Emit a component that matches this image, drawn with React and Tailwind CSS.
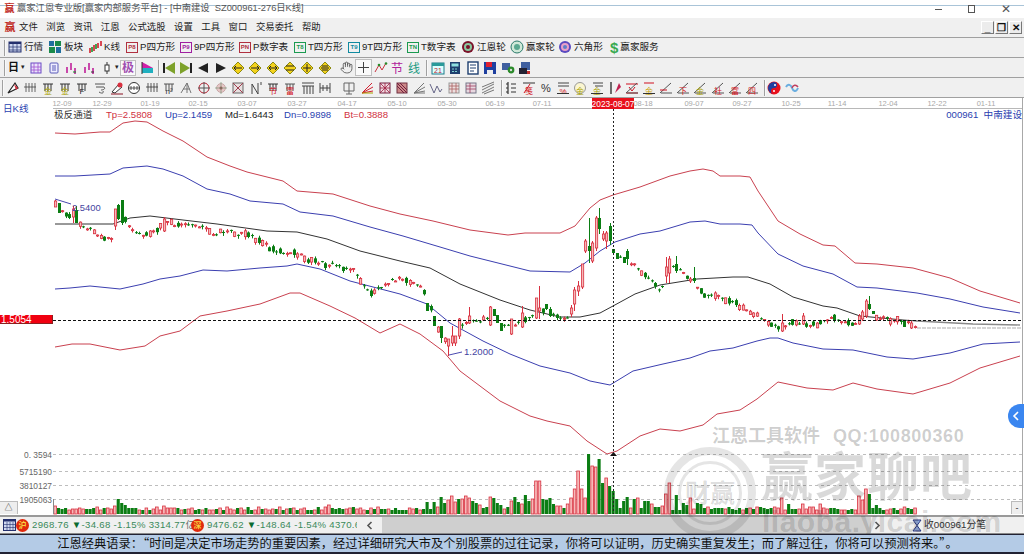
import React from "react";
import { Hand } from "lucide-react";

const CJK = { fontFamily: '"Liberation Sans", "Noto Sans CJK SC", sans-serif' };

const LINES = {
  redUp: [[55,132],[75,133],[100,131],[110,131],[123,122],[135,120],[147,121],[163,130],[183,140],[207,156],[230,165],[247,171],[283,180],[297,190],[333,193],[370,205],[400,213],[433,220],[470,229],[508,234],[525,232],[560,232],[575,225],[590,207],[600,199],[613,194],[640,186],[670,175],[690,170],[703,168],[713,170],[720,175],[740,175],[750,176],[758,190],[778,220],[800,233],[823,244],[835,245],[855,262],[877,263],[913,267],[950,277],[980,290],[1020,302]],
  blueUp: [[55,175],[75,175],[110,173],[123,167],[147,165],[163,168],[183,175],[207,188],[230,193],[250,200],[283,203],[300,211],[333,215],[370,226],[403,235],[440,246],[470,255],[510,265],[530,270],[570,271],[585,262],[600,250],[615,241],[640,233],[660,230],[690,221],[705,220],[720,223],[740,223],[752,224],[758,232],[778,253],[803,265],[833,273],[857,286],[877,287],[917,292],[950,298],[983,306],[1020,312]],
  black: [[55,223],[78,223],[113,223],[130,217],[150,215],[183,219],[217,223],[267,230],[297,231],[327,238],[360,250],[400,260],[430,267],[460,283],[500,299],[530,309],[560,316],[580,316],[600,312],[613,305],[635,293],[660,284],[697,278],[733,276],[748,276],[770,283],[793,296],[823,305],[837,307],[860,315],[903,319],[917,320]],
  blueDn: [[55,288],[70,287],[90,285],[120,288],[143,283],[160,278],[180,275],[203,269],[227,270],[260,267],[287,265],[297,263],[320,268],[350,280],[400,293],[427,303],[450,322],[483,340],[510,353],[540,365],[570,372],[590,380],[610,384],[633,370],[663,363],[690,357],[710,350],[733,347],[757,340],[770,337],[778,337],[793,342],[823,348],[853,349],[887,356],[913,358],[950,352],[983,343],[1020,341]],
  redDn: [[55,346],[72,343],[90,343],[120,349],[145,345],[160,335],[180,330],[200,315],[227,310],[260,303],[290,292],[300,292],[330,305],[355,317],[380,332],[400,323],[420,333],[443,350],[460,370],[500,400],[530,415],[547,420],[570,425],[587,440],[607,453],[617,450],[640,435],[660,428],[680,430],[703,424],[717,413],[740,409],[757,398],[778,381],[807,387],[833,389],[853,382],[877,388],[913,393],[950,382],[980,367],[1020,355]],
};

const CENTER = [[55,203],[60,207],[65,212],[70,215],[76,215],[80,222],[85,227],[90,228],[95,233],[103,238],[110,238],[125,220],[130,228],[135,233],[145,233],[155,231],[163,222],[170,222],[177,225],[190,222],[200,225],[205,228],[213,233],[225,230],[235,232],[250,235],[260,240],[270,247],[285,252],[295,252],[305,258],[320,262],[340,265],[355,270],[365,288],[372,292],[385,282],[400,278],[407,280],[420,285],[430,305],[435,318],[440,335],[445,340],[450,338],[455,335],[460,325],[470,318],[480,320],[490,315],[498,318],[505,325],[512,328],[520,320],[530,316],[540,312],[548,308],[552,315],[560,316],[565,318],[572,316],[613,250],[620,255],[630,262],[640,270],[650,280],[660,288],[665,283],[670,265],[680,270],[690,278],[697,288],[702,293],[705,296],[720,296],[735,303],[750,310],[757,315],[768,322],[778,328],[793,322],[813,324],[832,318],[842,321],[853,325],[860,320],[882,318],[898,319],[916,325]];

// x, body top, body bottom, u=up/d=down, wick top, wick bottom
const CANDLES = [
  [55,200,206,"u",199,206],[59,202,212,"d"],[72,208,216,"u",205,222],[76,209,222,"d",205,222],
  [114,208,225,"u",208,229],[118,204,218,"d",203,219],[122,199,222,"d",199,224],
  [163,218,230,"u",216,231],
  [427,302,310,"d"],[434,315,325,"d"],[440,325,337,"d",325,342],
  [449,338,345,"u",338,355],[452,335,342,"u",325,345],[455,335,342,"u",335,345],[459,318,335,"u",317,338],
  [470,315,322,"u",306,323],[490,306,324,"u",305,325],[493,308,315,"d"],[498,314,322,"d"],[502,322,330,"d"],
  [512,318,333,"u",318,334],[522,312,326,"u",305,327],[535,297,317,"u",297,318],[540,307,310,"u",285,318],[545,303,308,"d",303,309],[550,308,315,"d",306,316],
  [572,307,313,"u",304,316],[575,289,303,"u",286,310],[579,285,290,"u",280,295],[582,263,286,"u",263,288],[586,240,250,"u",238,252],
  [589,245,250,"d",217,262],[593,242,260,"u",240,262],[596,217,247,"u",215,250],[600,217,228,"d",207,233],[603,233,238,"u",230,240],[607,232,240,"u",230,248],[610,225,240,"d",222,244],
  [613,248,252,"d"],[618,252,258,"d"],[622,256,262,"d"],[628,250,258,"d",248,264],
  [666,266,275,"u",256,282],[670,258,272,"u",255,282],[677,263,270,"d",255,272],[690,278,280,"u",276,282],[694,277,280,"d",266,282],
  [782,322,330,"u",313,331],[803,315,323,"u",312,324],[860,315,323,"u",313,324],[863,311,318,"u",309,320],[867,300,315,"u",298,317],[870,303,308,"d",295,309],[873,310,313,"d"],[905,319,326,"d"],[913,322,327,"u",320,328],
];

// x, top of bar, colour
const VOLS = [
  [55,505,"u"],[59,507,"d"],[63,508,"d"],[115,505,"u"],[118,498,"d"],[122,502,"d"],[126,504,"d"],[163,505,"u"],[328,504,"u"],
  [427,501,"d"],[433,501,"d"],[438,506,"u"],[442,496,"d"],[445,502,"d"],[448,499,"u"],[452,495,"u"],[455,501,"u"],[460,498,"d"],[463,498,"u"],[466,495,"u"],[469,497,"u"],[473,500,"d"],[476,502,"d"],[480,504,"u"],[484,507,"d"],[487,506,"d"],[491,496,"u"],[494,497,"d"],[497,502,"d"],[502,504,"d"],[507,506,"d"],[512,500,"u"],[515,496,"d"],[518,501,"d"],[522,503,"u"],[526,494,"d"],[529,500,"d"],[533,498,"u"],[536,480,"u"],[539,480,"u"],[543,498,"d"],[547,499,"d"],[550,497,"d"],[554,503,"d"],[558,505,"u"],[562,505,"u"],[565,507,"d"],[567,503,"u"],[571,497,"u"],[575,488,"u"],[578,470,"u"],[582,488,"u"],[585,497,"u"],[588,453,"d"],[592,465,"u"],[596,466,"u"],[599,458,"d"],[603,482,"d"],[607,477,"u"],[610,485,"d"],[613,490,"d"],[618,498,"d"],[623,500,"d"],[628,496,"d"],[633,498,"d"],[638,497,"u"],[643,500,"d"],[647,500,"d"],[652,503,"u"],[656,506,"d"],[660,506,"d"],[663,505,"u"],[667,493,"u"],[670,482,"u"],[675,494,"d"],[678,494,"d"],[682,502,"d"],[687,504,"d"],[692,497,"u"],[697,502,"d"],[702,503,"d"],[708,506,"u"],
  [782,497,"u"],[787,503,"d"],[803,503,"u"],[820,503,"u"],[860,495,"u"],[863,499,"u"],[866,488,"u"],[870,493,"d"],[875,504,"d"],[917,510,"d"],
];

function interp(pts, x) {
  for (let i = 1; i < pts.length; i++) {
    if (x <= pts[i][0]) {
      const [x0, y0] = pts[i - 1];
      const [x1, y1] = pts[i];
      return y0 + ((y1 - y0) * (x - x0)) / (x1 - x0);
    }
  }
  return pts[pts.length - 1][1];
}

const rnd = (i) => {
  const v = Math.sin(i * 12.9898 + 4.1) * 43758.5453;
  return v - Math.floor(v);
};

const STEP = 3.51;
const COUNT = 246;
const UP_FILL = "#f7b9b9";
const UP_LINE = "#d8303f";
const DOWN = "#0b7d13";

function Candles() {
  const items = [];
  for (let i = 0; i < COUNT; i++) {
    const x = 55 + STEP * i;
    const hit = CANDLES.find((c) => Math.abs(c[0] - x) <= STEP / 2);
    let top, bottom, up, wt, wb;
    if (hit) {
      [, top, bottom] = hit;
      up = hit[3] === "u";
      wt = hit[4] ?? top;
      wb = hit[5] ?? bottom;
    } else {
      const y = interp(CENTER, x) + (rnd(i) - 0.5) * 4;
      up = rnd(i + 50) > 0.5;
      const h = rnd(i + 90) > 0.55 ? 3 + rnd(i + 7) * 3 : 1;
      top = y - h / 2;
      bottom = y + h / 2;
      wt = top - rnd(i + 3) * 2;
      wb = bottom + rnd(i + 9) * 3;
    }
    const cx = Math.round(x) + 0.5;
    items.push(
      <g key={i}>
        <line x1={cx} x2={cx} y1={wt} y2={wb} stroke={up ? UP_LINE : DOWN} strokeWidth="1" />
        {up ? (
          <rect x={cx - 1} y={top} width="2.2" height={Math.max(bottom - top, 1)} fill={UP_FILL} stroke={UP_LINE} strokeWidth="0.8" />
        ) : (
          <rect x={cx - 1.5} y={top} width="3" height={Math.max(bottom - top, 1)} fill={DOWN} />
        )}
      </g>
    );
  }
  return <g>{items}</g>;
}

function Volumes() {
  const items = [];
  for (let i = 0; i < COUNT; i++) {
    const x = 55 + STEP * i;
    const hit = VOLS.find((v) => Math.abs(v[0] - x) <= STEP / 2);
    const top = hit ? hit[1] : 506 + Math.round(rnd(i + 21) * 3.5);
    const up = hit ? hit[2] === "u" : rnd(i + 33) > 0.5;
    items.push(
      up ? (
        <rect key={i} x={x - 1.2} y={top} width="2.6" height={513 - top} fill={UP_FILL} stroke={UP_LINE} strokeWidth="0.8" />
      ) : (
        <rect key={i} x={x - 1.5} y={top} width="3.1" height={513 - top} fill={DOWN} />
      )
    );
  }
  return <g>{items}</g>;
}

const toPts = (pts) => pts.map((p) => p.join(",")).join(" ");

const DATES = [["12-09",62],["12-29",102],["01-19",150],["02-15",198],["03-07",247],["03-27",297],["04-17",347],["05-10",397],["05-30",447],["06-19",495],["07-11",542],["08-18",643],["09-07",694],["09-27",742],["10-25",791],["11-14",837],["12-04",888],["12-22",937],["01-11",986]];
const GRID = [[453,"0. 3594"],[470,"5715190"],[484,"3810127"],[498,"1905063"]];

function Chart() {
  return (
    <svg width="1024" height="417" viewBox="0 97 1024 417" className="block">
      {DATES.map(([d, x]) => (
        <text key={d} x={x} y="105" textAnchor="middle" fontSize="7.5" fill="#a8a8a8" fontFamily="Liberation Sans">{d}</text>
      ))}
      <line x1="53" x2="1022" y1="107.5" y2="107.5" stroke="#b8b8b8" />
      <rect x="592" y="97" width="42" height="11" fill="#e8101c" />
      <text x="613" y="106" textAnchor="middle" fontSize="8.4" fill="#fff" fontFamily="Liberation Sans">2023-08-07</text>
      <line x1="1022.5" x2="1022.5" y1="97" y2="513" stroke="#a8a8a8" />

      {GRID.map(([y, label]) => (
        <g key={y}>
          <line x1="53" x2="1022" y1={y + 0.5} y2={y + 0.5} stroke="#bdbdbd" strokeDasharray="3 3" />
          <text x="52" y={y + 3.5} textAnchor="end" fontSize="8.4" fill="#666" fontFamily="Liberation Sans">{label}</text>
        </g>
      ))}

      <polyline points={toPts(LINES.redUp)} fill="none" stroke="#c9414f" strokeWidth="1" />
      <polyline points={toPts(LINES.blueUp)} fill="none" stroke="#3b3fb0" strokeWidth="1" />
      <polyline points={toPts(LINES.black)} fill="none" stroke="#333" strokeWidth="1" />
      <polyline points="917,320 973,323 1020,324" fill="none" stroke="#8a8a8a" strokeWidth="1.4" />
      <line x1="917" x2="1022" y1="327" y2="327" stroke="#c8c8c8" strokeWidth="1.4" strokeDasharray="4 1" />
      <polyline points={toPts(LINES.blueDn)} fill="none" stroke="#3b3fb0" strokeWidth="1" />
      <polyline points={toPts(LINES.redDn)} fill="none" stroke="#c9414f" strokeWidth="1" />

      <Volumes />
      <Candles />

      <polyline points="55,198 71,203" fill="none" stroke="#4a4ab0" />
      <text x="72" y="210" fontSize="9.4" fill="#44449f" fontFamily="Liberation Sans">2.5400</text>
      <polyline points="449,354 462,351" fill="none" stroke="#4a4ab0" />
      <text x="464" y="354" fontSize="9.6" fill="#44449f" fontFamily="Liberation Sans">1.2000</text>

      <line x1="53" x2="1022" y1="319.5" y2="319.5" stroke="#111" strokeDasharray="3 2" />
      <line x1="613.5" x2="613.5" y1="108" y2="513" stroke="#222" strokeDasharray="2 2" />
      <path d="M613.5 451 L617 455 L610 455 Z" fill="#111" />
      <line x1="53.5" x2="53.5" y1="498" y2="513" stroke="#888" />
    </svg>
  );
}

// small toolbar drawings, all in a 14x14 box
const Ic = ({ children }) => (
  <svg width="14" height="14" viewBox="0 0 14 14" className="block">{children}</svg>
);

const Diamond = ({ mark }) => (
  <Ic>
    <path d="M7 1 L13 7 L7 13 L1 7 Z" fill="#f4d21c" stroke="#8c8a12" />
    {mark}
  </Ic>
);

const ROW2_A = [
  <Ic><rect x="2" y="2" width="10" height="10" fill="#e9e4fb" stroke="#6a4bc4" /><path d="M2 6 L12 6 M2 9 L12 9 M5 2 L5 12 M9 2 L9 12" stroke="#a04fd0" strokeWidth="0.8" /></Ic>,
  <Ic><rect x="3" y="2" width="8" height="10" rx="1" fill="#eef" stroke="#5a5ab8" /><path d="M5 5 H9 M5 7 H9 M5 9 H9" stroke="#5a5ab8" /></Ic>,
  <Ic><path d="M3 6 V12 M7 2 V9 M11 7 V13" stroke="#c0209a" strokeWidth="1.6" /><path d="M9 11 H12" stroke="#0a8a20" /></Ic>,
  <Ic><path d="M3 6 V12 M7 2 V9 M11 7 V13" stroke="#c0209a" strokeWidth="1.6" /><path d="M9 11 H12" stroke="#333" /></Ic>,
  <Ic><path d="M7 1 V13" stroke="#333" /><rect x="5" y="4" width="4" height="6" fill="#fff" stroke="#333" /></Ic>,
];

const ROW2_C = [
  <Ic><path d="M1 2 H3 V12 H1 Z" fill="#222" /><path d="M13 1 L3 7 L13 13 Z" fill="#7da12a" /></Ic>,
  <Ic><path d="M11 2 H13 V12 H11 Z" fill="#222" /><path d="M1 1 L11 7 L1 13 Z" fill="#7da12a" /></Ic>,
  <Ic><path d="M12 2 L2 7 L12 12 Z" fill="#222" /></Ic>,
  <Ic><path d="M2 2 L12 7 L2 12 Z" fill="#222" /></Ic>,
  <Diamond mark={<path d="M3 7 H11 M5 5 L3 7 L5 9" stroke="#222" fill="none" />} />,
  <Diamond mark={<path d="M3 7 H11 M9 5 L11 7 L9 9" stroke="#222" fill="none" />} />,
  <Diamond mark={<path d="M3 7 H11 M5 5 L3 7 L5 9 M9 5 L11 7 L9 9" stroke="#222" fill="none" />} />,
  <Diamond mark={<path d="M3 5 H11 M3 9 H11" stroke="#222" />} />,
  <Diamond mark={<path d="M7 3 V11 M3 7 H11" stroke="#222" />} />,
  <Diamond mark={<path d="M4 5 H10 M3 7 H11 M4 9 H10" stroke="#222" />} />,
];

const ROW2_D = [
  <Ic><path d="M1 11 L5 4 L8 9 L12 2" fill="none" stroke="#c9303c" /><circle cx="5" cy="4" r="1.3" fill="#2a8a2a" /><circle cx="12" cy="2.5" r="1.3" fill="#2a8a2a" /></Ic>,
  <Ic><text x="7" y="11.5" textAnchor="middle" fontSize="12" fill="#b0209a" style={CJK}>节</text></Ic>,
  <Ic><text x="7" y="11.5" textAnchor="middle" fontSize="12" fill="#1a9a80" style={CJK}>线</text></Ic>,
];

const ROW2_E = [
  <Ic><rect x="1" y="2" width="12" height="11" fill="#dff" stroke="#1a7a8a" /><rect x="1" y="2" width="12" height="3" fill="#2a9a9a" /><text x="7" y="12" textAnchor="middle" fontSize="7" fill="#c02030" fontFamily="Liberation Sans">21</text></Ic>,
  <Ic><rect x="2" y="1" width="10" height="12" fill="#1f3f6f" /><rect x="3.5" y="2.5" width="7" height="3" fill="#8fe0e0" /><path d="M4 8 H10 M4 10.5 H10" stroke="#7fd0d0" strokeDasharray="2 1" /></Ic>,
  <Ic><rect x="2" y="1" width="10" height="12" fill="#fff" stroke="#1f3f6f" strokeWidth="1.4" /><path d="M4 4 H10 M4 7 H10 M4 10 H8" stroke="#1f3f6f" /></Ic>,
  <Ic><rect x="1" y="1" width="12" height="12" fill="#1f3f9f" /><rect x="3" y="1" width="6" height="5" fill="#e02030" /><rect x="4" y="9" width="6" height="4" fill="#eee" /></Ic>,
  <Ic><rect x="1" y="2" width="8" height="7" fill="#3f5f9f" /><circle cx="10" cy="9" r="3.4" fill="#2a8a2a" /><circle cx="10" cy="9" r="1.2" fill="#ddd" /></Ic>,
  <Ic><rect x="3" y="1" width="9" height="8" fill="#3f5f9f" /><rect x="1" y="7" width="8" height="6" fill="#223" /><rect x="9" y="10" width="3" height="3" fill="#c03030" /></Ic>,
];

const lbl = (t, c) => <text x="7" y="12.5" textAnchor="middle" fontSize="8" fill={c} style={CJK}>{t}</text>;
const bars = (c = "#333") => <path d="M2 3 H12 M4 3 V10 M7 3 V10 M10 3 V10" stroke={c} />;
const fan = (c) => <path d="M2 12 L12 2 M2 12 L13 6 M2 12 L13 10" stroke={c} fill="none" />;
const under = <path d="M1 12.5 H13" stroke="#333" />;
const slash = <path d="M1 12 L12 2 M2 12 H13" stroke="#555" fill="none" />;

const ROW3_A = [
  <Ic><path d="M2 12 L9 2 L12 7 Z" fill="#fff" stroke="#222" strokeWidth="1.2" /><path d="M8 3 L12 7 L10 9 Z" fill="#d8303f" /></Ic>,
  <Ic><path d="M1 6 H13 M3 2 V11 M6 2 V11 M9 2 V11 M12 2 V11" stroke="#444" strokeWidth="0.8" /></Ic>,
  <Ic>{bars()}{lbl("金", "#a8a000")}</Ic>,
  <Ic>{bars()}{lbl("金", "#a8a000")}</Ic>,
  <Ic>{bars()}{lbl("F", "#222")}</Ic>,
  <Ic><path d="M2 3 H12 M3 6 H11 C13 8 10 9 8 9 M6 11 C9 13 11 12 10 10" stroke="#555" fill="none" /></Ic>,
  <Ic><path d="M2 11 L9 3 L12 6 L5 12 Z" fill="#fff" stroke="#333" /><circle cx="10" cy="4" r="2.5" fill="#d8303f" /><path d="M1 13 H13" stroke="#8a1020" /></Ic>,
  <Ic><circle cx="7" cy="7" r="5.5" fill="#fff" stroke="#333" /><path d="M2 7 H12 M4 5 V9 M7 5 V9 M10 5 V9" stroke="#333" strokeWidth="0.8" /></Ic>,
  <Ic><path d="M1 6 H13 M3 2 V11 M6 2 V11 M9 2 V11 M12 2 V11" stroke="#333" strokeWidth="0.8" /></Ic>,
  <Ic>{bars("#555")}{lbl("n²", "#333")}</Ic>,
  <Ic><path d="M2 12 L8 2 L12 12 M4 8 H11 M8 2 V12" stroke="#777" fill="none" /></Ic>,
  <Ic><circle cx="7" cy="7" r="5" fill="none" stroke="#b02030" /><path d="M1 7 H13 M7 1 V13" stroke="#555" /></Ic>,
  <Ic><circle cx="7" cy="7" r="4.4" fill="#e6c6c6" stroke="#c8a8a8" /><circle cx="7" cy="7" r="1.5" fill="#a03040" /><path d="M1 7 H13 M7 1 V13" stroke="#7a9a7a" strokeWidth="0.7" /></Ic>,
  <Ic><rect x="2" y="2" width="10" height="10" fill="#e8e0e0" stroke="#666" /><path d="M2 2 L12 12 M12 2 L2 12" stroke="#a04050" /></Ic>,
  <Ic><path d="M3 13 V3 M3 3 L9 13 M9 2 V13 M12 1 V4" stroke="#444" fill="none" /></Ic>,
  <Ic>{bars()}{lbl("节", "#d01020")}</Ic>,
  <Ic>{bars("#555")}{lbl("富", "#d01020")}</Ic>,
  <Ic><path d="M1 2 H13 M1 5 H13 M3 5 V13 M6 5 V13 M9 5 V13 M12 5 V13" stroke="#444" /></Ic>,
  <Ic><path d="M2 2 V12 M12 2 V12 M2 7 H12 M5 4 V10 M9 4 V10" stroke="#444" /></Ic>,
];
const ROW3_B = [
  <Ic><path d="M1 2 H11 V10 H1 Z M6 2 V13 M3 13 H9" fill="none" stroke="#666" /></Ic>,
  <Ic>{fan("#d02030")}<path d="M2 12 H13" stroke="#a8a000" /></Ic>,
  <Ic><rect x="2" y="2" width="10" height="10" fill="#f0d8e0" stroke="#702040" /><path d="M2 12 L12 2 M2 2 L12 12 M7 2 V12 M2 7 H12" stroke="#a02040" strokeWidth="0.8" /></Ic>,
  <Ic><rect x="2" y="2" width="10" height="10" fill="#c88" stroke="#703040" /><path d="M2 2 L12 12 M5 2 L12 9 M2 5 L9 12" stroke="#702040" /></Ic>,
  <Ic>{fan("#777")}<path d="M2 12 H13" stroke="#777" /></Ic>,
  <Ic><path d="M1 3 L5 12 L8 5 L11 11 L13 8" fill="none" stroke="#668" /></Ic>,
  <Ic><rect x="2" y="2" width="10" height="10" fill="#eee0e0" stroke="#999" /><path d="M2 5 H12 M2 8 H12 M5 2 V12 M9 2 V12" stroke="#a86060" strokeWidth="0.8" /></Ic>,
  <Ic><rect x="2" y="2" width="10" height="10" fill="#e8d8e0" stroke="#778" /><path d="M2 5 H12 M2 8 H12 M6 2 V12" stroke="#a04060" strokeWidth="0.8" /></Ic>,
  <Ic><path d="M1 9 L13 3 M1 12 L13 6 M1 6 L13 1 M3 13 L13 9" stroke="#777" /></Ic>,
];
const ROW3_C = [
  <Ic><path d="M4 1 V13 M2 3 H4 M2 7 H4 M2 11 H4 M7 3 H12 M7 7 H12 M7 11 H12" stroke="#333" strokeWidth="1.2" /></Ic>,
  <Ic><path d="M1 2 H13" stroke="#333" /><path d="M2 12 L8 3" stroke="#d01020" />{lbl("笺", "#d01020")}</Ic>,
  <Ic><text x="7" y="11" textAnchor="middle" fontSize="11" fill="#333" fontFamily="Liberation Sans">%</text></Ic>,
  <Ic><path d="M2 2 H13 M2 5 H13" stroke="#444" />{lbl("%", "#d01020")}{under}</Ic>,
  <Ic><circle cx="7" cy="7" r="5.5" fill="#fbf6d0" stroke="#999" />{lbl("金", "#a8a000")}</Ic>,
  <Ic><path d="M3 2 H13 M5 5 H13" stroke="#444" />{lbl("金", "#a8a000")}{under}</Ic>,
  <Ic><path d="M3 1 V13" stroke="#333" strokeWidth="1.4" /><path d="M7 12 L11 2 L13 6 Z" fill="#c02050" /></Ic>,
  <Ic><path d="M1 3 H13 M1 12 H13 M4 6 L7 10 L10 6" stroke="#d01020" fill="none" />{slash}</Ic>,
  <Ic><path d="M2 2 H12" stroke="#d01020" />{lbl("金", "#c8a000")}{under}</Ic>,
  <Ic>{slash}<path d="M1 9 H8" stroke="#d01020" /></Ic>,
  <Ic>{slash}{lbl("下", "#d01020")}</Ic>,
  <Ic>{slash}{lbl("金", "#a8a000")}</Ic>,
  <Ic>{slash}{lbl("社", "#d01020")}</Ic>,
  <Ic>{slash}{lbl("富", "#d01020")}</Ic>,
  <Ic>{slash}{lbl("四", "#d01020")}</Ic>,
];
const ROW3_D = [
  <Ic><circle cx="7" cy="7" r="6.5" fill="#e8101c" /><path d="M7 1 A3 3 0 0 1 7 7 A3 3 0 0 0 7 13 A6 6 0 0 1 7 1" fill="#1f3fa0" /><circle cx="8" cy="4" r="1" fill="#fff" /><circle cx="7" cy="10" r="1" fill="#fff" /></Ic>,
  <Ic><path d="M1 6 C3 2 6 4 7 7 C8 10 11 12 13 7" fill="none" stroke="#6aaee0" strokeWidth="2" /><path d="M7 7 C8 4 11 3 13 6" fill="none" stroke="#c04060" strokeWidth="1.4" /></Ic>,
];

const Sep = () => <div className="w-[2px] h-[16px] border-l border-[#a0a0a0] bg-white/60 shrink-0" />;

const Cells = ({ items, w }) =>
  items.map((it, i) => (
    <div key={i} className={`${w} flex justify-center shrink-0`}>{it}</div>
  ));

const Row = ({ children }) => (
  <div className="h-[20px] flex items-center border-b border-[#a0a0a0] bg-[#f0f0f0] shrink-0">{children}</div>
);

const TOOLS = [
  { t: "行情", w: "w-[40px]", i: <Ic><rect x="1" y="2" width="12" height="10" fill="#cfd8f0" stroke="#24306e" /><rect x="1" y="2" width="12" height="2" fill="#24306e" /><path d="M1 7 H13 M1 10 H13 M5 4 V12 M9 4 V12" stroke="#24306e" strokeWidth="0.7" /></Ic> },
  { t: "板块", w: "w-[40px]", i: <Ic><rect x="1" y="1" width="5" height="5" fill="#1f6f9f" /><rect x="7" y="1" width="6" height="5" fill="#1a8a4a" /><rect x="1" y="7" width="6" height="6" fill="#1a8a4a" /><rect x="8" y="7" width="5" height="6" fill="#1f6f9f" /></Ic> },
  { t: "K线", w: "w-[38px]", i: <Ic><path d="M2 8 V13 M6 5 V11 M10 3 V8 M13 1 V6" stroke="#d01020" strokeWidth="1.5" /><path d="M4 7 V12 M8 4 V9" stroke="#0a8a20" strokeWidth="1.5" /></Ic> },
  { t: "P四方形", w: "w-[54px]", c: "#b03040", k: "P8" },
  { t: "9P四方形", w: "w-[59px]", c: "#a020a0", k: "P9" },
  { t: "P数字表", w: "w-[55px]", c: "#b03040", k: "PN" },
  { t: "T四方形", w: "w-[54px]", c: "#1a9a50", k: "T8" },
  { t: "9T四方形", w: "w-[59px]", c: "#108aa0", k: "T9" },
  { t: "T数字表", w: "w-[54px]", c: "#1a9a50", k: "TN" },
  { t: "江恩轮", w: "w-[49px]", i: <Ic><circle cx="7" cy="7" r="6" fill="#7a1028" /><circle cx="7" cy="7" r="4" fill="#8ac8a0" /><circle cx="7" cy="7" r="2" fill="#7a1028" /></Ic> },
  { t: "赢家轮", w: "w-[48px]", i: <Ic><circle cx="7" cy="7" r="6" fill="#cfe8d8" stroke="#2a7a6a" /><circle cx="7" cy="7" r="3" fill="#5aa890" /></Ic> },
  { t: "六角形", w: "w-[52px]", i: <Ic><circle cx="7" cy="7" r="6" fill="#5a4ac0" /><circle cx="7" cy="7" r="4" fill="#e8a0c8" /><circle cx="7" cy="7" r="2" fill="#5a80c8" /></Ic> },
  { t: "赢家服务", w: "w-[50px]", i: <span className="text-[15px] font-bold text-[#3aaa50] leading-none" style={CJK}>$</span> },
];

const MENUS = ["文件", "浏览", "资讯", "江恩", "公式选股", "设置", "工具", "窗口", "交易委托", "帮助"];

const MdiBtn = ({ children }) => (
  <div className="w-[13px] h-[13px] bg-[#ececec] border-r border-b border-[#777] border-t border-l border-t-white border-l-white flex items-center justify-center text-[10px] font-bold leading-none text-[#111]">{children}</div>
);

export default function App() {
  return (
    <div className="w-[1024px] h-[554px] overflow-hidden bg-white flex flex-col relative" style={CJK}>
      {/* title bar */}
      <div className="h-[18px] relative bg-white flex items-center pl-[2px] shrink-0">
        <div className="absolute left-0 right-0 top-[5px] h-px bg-[#a9c4d8]" />
        <span className="relative text-[10px] font-bold text-[#c0281c] w-[15px] text-center leading-none">赢</span>
        <span className="relative text-[9.3px] text-[#555]">赢家江恩专业版[赢家内部服务平台] - [中南建设&nbsp;&nbsp;SZ000961-276日K线]</span>
        <div className="ml-auto flex items-center relative text-[#555]">
          <div className="w-[7px] h-px bg-[#555]" />
          <div className="w-[7px] h-[8px] border border-[#555] ml-[26px]" />
          <span className="text-[12px] leading-none ml-[26px] mr-[13px]">✕</span>
        </div>
      </div>

      {/* menu */}
      <Row>
        <span className="text-[11px] font-bold text-[#c0281c] w-[18px] text-center pl-[2px] leading-none">赢</span>
        <div className="flex text-[9.4px] text-[#222] gap-[8.5px] ml-[1px]">
          {MENUS.map((m) => (
            <span key={m}>{m}</span>
          ))}
        </div>
        <div className="ml-auto flex gap-px mr-[2px]">
          <MdiBtn>_</MdiBtn>
          <MdiBtn>❐</MdiBtn>
          <MdiBtn>✕</MdiBtn>
        </div>
      </Row>

      {/* tool rows */}
      <Row>
        <div className="w-[4px]" />
        <Sep />
        <div className="w-[2px]" />
        <div className="flex items-center text-[9.6px] text-[#222]">
          {TOOLS.map((t) => (
            <div key={t.t} className={`${t.w} flex items-center gap-[2px] shrink-0`}>
              {t.i ?? (
                <span className="w-[12px] h-[11px] border text-[6px] leading-[9px] text-center font-bold" style={{ borderColor: t.c, color: t.c }}>{t.k}</span>
              )}
              <span className="whitespace-nowrap">{t.t}</span>
            </div>
          ))}
        </div>
      </Row>

      <Row>
        <div className="w-[4px]" />
        <Sep />
        <div className="w-[2px]" />
        <span className="text-[11px] font-bold text-[#111] w-[11px]">日</span>
        <span className="text-[7px] text-[#222] w-[6px] ml-[2px]">▾</span>
        <Cells items={ROW2_A} w="w-[17.7px]" />
        <span className="text-[7px] text-[#222] w-[6px]">▾</span>
        <div className="w-[16px] h-[16px] border border-[#c0c0c0] bg-[#fafafa] flex items-center justify-center ml-[-1.5px] shrink-0">
          <span className="text-[12px] leading-none text-[#a04fb0] font-bold">极</span>
        </div>
        <div className="w-[22px] flex justify-center shrink-0">
          <Ic><path d="M2 1 L13 7 L2 7 Z" fill="#d020a8" /><path d="M2 7 L13 7 L13 12 L2 12 Z" fill="#20b0c0" /><path d="M2 1 V13" stroke="#333" /></Ic>
        </div>
        <Sep />
        <Cells items={ROW2_C} w="w-[17.33px]" />
        <div className="w-[5px]" />
        <div className="w-[17px] flex justify-center text-[#333] shrink-0"><Hand size={13} strokeWidth={1.3} /></div>
        <div className="w-[17px] h-[17px] border border-[#c0c0c0] bg-[#fafafa] flex items-center justify-center shrink-0">
          <svg width="13" height="13" viewBox="0 0 13 13"><path d="M6.5 1 V12 M1 6.5 H12" stroke="#444" /></svg>
        </div>
        <Cells items={ROW2_D} w="w-[16.7px]" />
        <div className="w-[3.5px]" />
        <Sep />
        <div className="w-[1.5px]" />
        <Cells items={ROW2_E} w="w-[17.4px]" />
      </Row>

      <Row>
        <div className="w-[2px]" />
        <Sep />
        <div className="w-[0.3px]" />
        <Cells items={ROW3_A} w="w-[17.33px]" />
        <div className="w-[8px]" />
        <Cells items={ROW3_B} w="w-[17.25px]" />
        <div className="w-[4px]" />
        <Sep />
        <Cells items={ROW3_C} w="w-[17.2px]" />
        <div className="w-[3px]" />
        <Sep />
        <Cells items={ROW3_D} w="w-[17.5px]" />
      </Row>

      {/* chart */}
      <div className="relative h-[417px] shrink-0 bg-white">
        <Chart />
        <span className="absolute left-[3px] top-[4px] text-[9.6px] text-[#2a3fb0]">日K线</span>
        <div className="absolute left-[54px] top-[11px] flex text-[9.6px] leading-[12px]">
          <span className="w-[52px] text-[#333]">极反通道</span>
          <span className="w-[59px] text-[#d03040]">Tp=2.5808</span>
          <span className="w-[60px] text-[#2a3fb0]">Up=2.1459</span>
          <span className="w-[59px] text-[#222]">Md=1.6443</span>
          <span className="w-[60px] text-[#2a3fb0]">Dn=0.9898</span>
          <span className="text-[#d03040]">Bt=0.3888</span>
        </div>
        <span className="absolute right-[2px] top-[11px] text-[9.6px] leading-[12px] text-[#2a3fb0]">000961&nbsp;&nbsp;中南建设</span>

        <div className="absolute left-0 top-[217px] w-[53px] h-[9px] bg-[#f00010] border-b border-r border-[#8a2020] text-[10px] leading-[9px] text-white pl-[1px]">1.5054</div>

        <div className="absolute right-0 top-[306px] w-[16px] h-[24px] rounded-l-full bg-[#3a86f0] flex items-center justify-center">
          <svg width="8" height="10" viewBox="0 0 8 10"><path d="M6 1 L2 5 L6 9" fill="none" stroke="#fff" strokeWidth="1.6" /></svg>
        </div>

        <div className="absolute left-0 bottom-[1px] w-[18px] h-[13px] bg-[#eee] border-t border-r border-[#bbb] flex items-center justify-center text-[8px] leading-none text-[#333]">△</div>
        <div className="absolute right-[2px] bottom-[1px] w-[11px] h-[13px] bg-[#eee] border-t border-l border-[#bbb] flex items-center justify-center text-[9px] leading-none text-[#333]">-</div>
      </div>

      {/* status bar */}
      <div className="h-[19px] shrink-0 flex items-center bg-[#f0f0f0] border-t-2 border-[#999] border-b border-b-[#888]">
        <svg width="13" height="12" viewBox="0 0 13 12" className="ml-[3px] shrink-0"><rect x="0.5" y="0.5" width="12" height="11" fill="#cfd8f0" stroke="#24306e" /><rect x="0" y="0" width="13" height="2.5" fill="#24306e" /><path d="M1 5.5 H12 M1 8.5 H12 M4 3 V11 M7 3 V11 M10 3 V11" stroke="#24306e" strokeWidth="0.6" /></svg>
        <span className="w-[13px] h-[13px] rounded-full bg-[#e0280c] text-[#f6d040] text-[8px] leading-[13px] text-center font-bold shrink-0">沪</span>
        <div className="ml-[3px] w-[156px] whitespace-nowrap text-[9.6px] text-[#3a8a5a] tracking-[0.3px] shrink-0">
          2968.76 <span className="text-[#0a6a30]">▼</span>-34.68 -1.15% 3314.77<span className="text-[#666]">亿</span>
        </div>
        <span className="ml-[3px] w-[13px] h-[13px] rounded-full bg-[#e0280c] text-[#f6d040] text-[8px] leading-[13px] text-center font-bold shrink-0">深</span>
        <div className="ml-[3px] w-[150px] whitespace-nowrap text-[9.6px] text-[#3a8a5a] tracking-[0.3px] shrink-0">
          9476.62 <span className="text-[#0a6a30]">▼</span>-148.64 -1.54% 4370.67
        </div>
        <div className="w-[548px] h-[16px] flex items-center bg-[#f0f0f0] shrink-0">
          <div className="w-[25px] flex justify-center">
            <svg width="7" height="9" viewBox="0 0 7 9"><path d="M5.5 1 L2 4.5 L5.5 8" fill="none" stroke="#555" strokeWidth="1.6" /></svg>
          </div>
          <div className="flex-1 h-full bg-[#cfcfcf]" />
          <div className="w-[12px] flex justify-center">
            <svg width="7" height="9" viewBox="0 0 7 9"><path d="M1.5 1 L5 4.5 L1.5 8" fill="none" stroke="#555" strokeWidth="1.6" /></svg>
          </div>
          <div className="w-[22px]" />
        </div>
        <svg width="10" height="13" viewBox="0 0 10 13" className="ml-[7px] shrink-0"><path d="M1 1 H9 L5 6.5 L9 12 H1 L5 6.5 Z" fill="#9ab0e0" stroke="#303a80" /></svg>
        <span className="ml-[2px] text-[9.8px] text-[#333] whitespace-nowrap">收000961分笔</span>
      </div>

      {/* watermark sits above chart and status bar, below the quote bar */}
      <div className="absolute left-[712px] top-[424px] text-[18px] leading-[24px] font-bold text-black/20 whitespace-nowrap pointer-events-none">江恩工具软件<span className="ml-[13px] tracking-[0.6px]">QQ:100800360</span></div>
      <div className="absolute left-[664px] top-[447px] w-[92px] h-[92px] rounded-full border-[8px] border-black/10 flex items-center justify-center pointer-events-none">
        <div className="w-[64px] h-[64px] rounded-full border-[3px] border-black/10 flex items-center justify-center text-[25px] font-bold text-black/15 leading-none whitespace-nowrap">财赢</div>
      </div>
      <div className="absolute left-[761px] top-[447px] text-[52px] leading-[62px] font-bold text-black/15 whitespace-nowrap tracking-[1px] pointer-events-none">赢家聊吧</div>
      <div className="absolute left-[762px] top-[505px] text-[30px] leading-[34px] font-bold text-black/15 whitespace-nowrap tracking-[0.5px] pointer-events-none">liaoba.yicai.com</div>

      {/* quote */}
      <div className="relative z-10 flex-1 bg-[#b4cbe6] border-t border-[#223] border-b-2 border-b-[#223] flex items-center justify-center pr-[9px]">
        <span className="text-[12.25px] leading-none text-[#111] whitespace-nowrap" style={{ fontFamily: '"Noto Sans CJK SC", sans-serif' }}>江恩经典语录：“时间是决定市场走势的重要因素，经过详细研究大市及个别股票的过往记录，你将可以证明，历史确实重复发生；而了解过往，你将可以预测将来。”。</span>
      </div>
    </div>
  );
}
